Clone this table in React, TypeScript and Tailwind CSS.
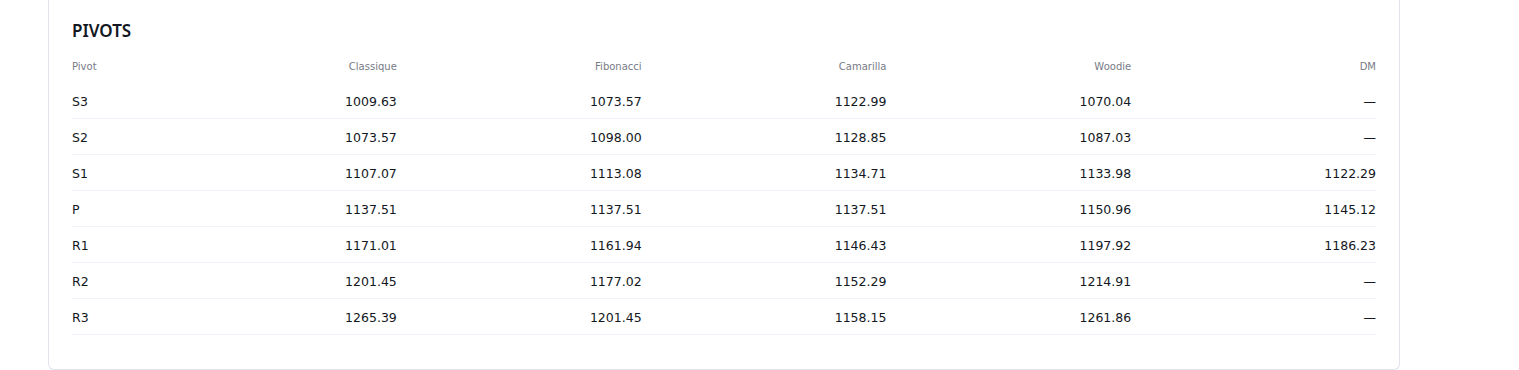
import React from 'react';

type Row = { label: string; values: string[] };

const COLUMNS = ['Classique', 'Fibonacci', 'Camarilla', 'Woodie', 'DM'];

const ROWS: Row[] = [
  { label: 'S3', values: ['1009.63', '1073.57', '1122.99', '1070.04', '—'] },
  { label: 'S2', values: ['1073.57', '1098.00', '1128.85', '1087.03', '—'] },
  { label: 'S1', values: ['1107.07', '1113.08', '1134.71', '1133.98', '1122.29'] },
  { label: 'P', values: ['1137.51', '1137.51', '1137.51', '1150.96', '1145.12'] },
  { label: 'R1', values: ['1171.01', '1161.94', '1146.43', '1197.92', '1186.23'] },
  { label: 'R2', values: ['1201.45', '1177.02', '1152.29', '1214.91', '—'] },
  { label: 'R3', values: ['1265.39', '1201.45', '1158.15', '1261.86', '—'] },
];

const App: React.FC = () => {
  return (
    <div className="min-h-screen w-full bg-white pl-[48px] font-['DejaVu_Sans',sans-serif] text-[#131722]">
      <div className="w-[1352px] border-x border-b border-[#e0e3eb] rounded-b-md px-[23px] pt-[19px] pb-[34px]">
        <h2 className="font-['Noto_Sans',sans-serif] text-[17px] leading-[24px] font-semibold">PIVOTS</h2>

        {/* en-têtes */}
        <div className="grid grid-cols-[80px_repeat(5,1fr)] pt-[17px] pb-[9px] text-[10px] leading-[14px] text-[#787b86]">
          <div>Pivot</div>
          {COLUMNS.map((c) => (
            <div key={c} className="text-right">{c}</div>
          ))}
        </div>

        {ROWS.map((r) => (
          <div
            key={r.label}
            className="grid grid-cols-[80px_repeat(5,1fr)] h-[36px] pt-[3px] items-center border-b border-[#f0f3fa] text-[12.5px]"
          >
            <div>{r.label}</div>
            {r.values.map((v, i) => (
              <div key={i} className="text-right">{v}</div>
            ))}
          </div>
        ))}
      </div>
    </div>
  );
};

export default App;
